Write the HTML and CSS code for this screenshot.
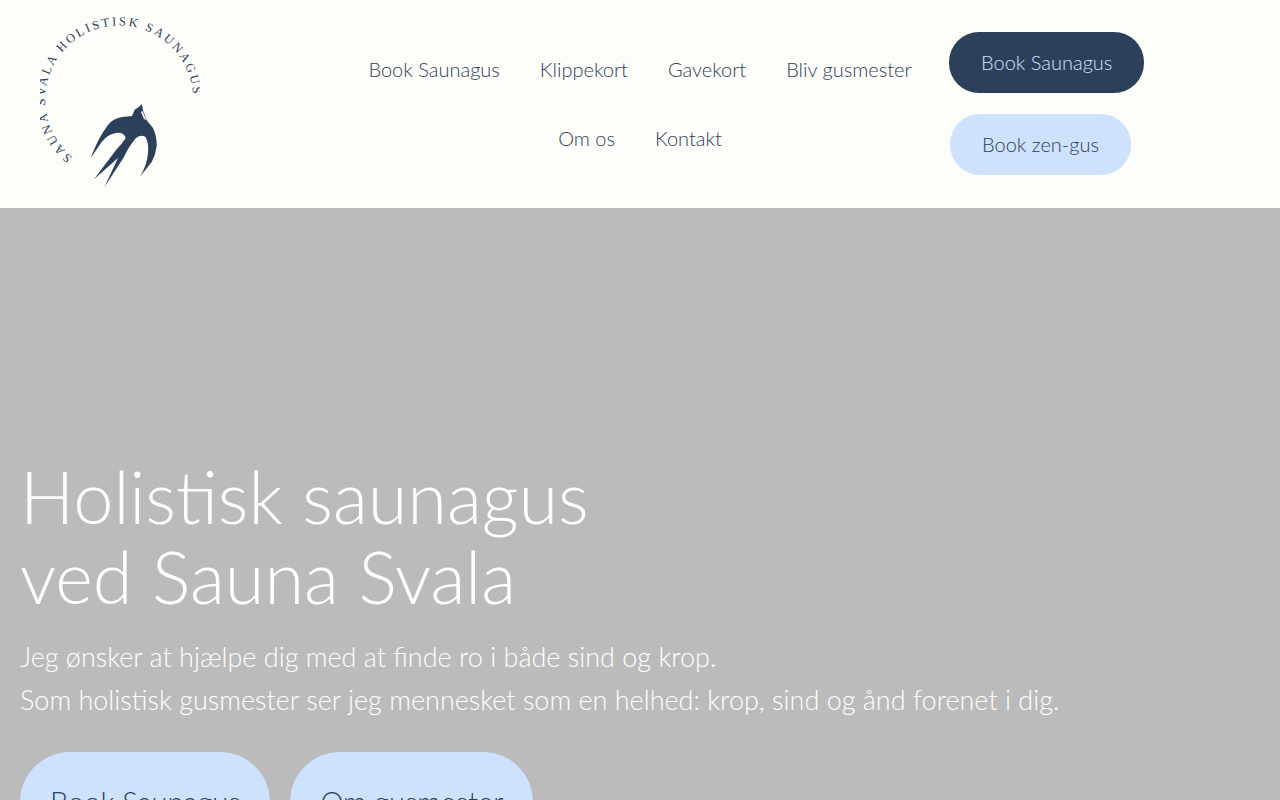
FILE: index.html
```html
<!DOCTYPE html>
<html lang="da">
<head>
    <meta charset="UTF-8">
    <meta name="viewport" content="width=device-width, initial-scale=1.0">
    <title>Sauna Svala</title>
    <link rel="stylesheet" href="styles.css">
</head>
<body>
    <header class="site-header">
        <a class="logo" href="#" aria-label="Sauna Svala">
            <svg width="160" height="176" viewBox="40 15 160 176">
                <defs>
                    <path id="logo-ring" d="M72.5 157 A 74 74 0 1 1 175 148"></path>
                </defs>
                <text class="logo-text"><textPath href="#logo-ring">SAUNA SVALA HOLISTISK SAUNAGUS</textPath></text>
                <path class="logo-bird" d="M141.7 104 L143.5 112 L146.5 120 L153 128 Q157 137 156.7 146 Q155.5 155 151.7 162 L140 176.7 Q147 165 148 153 Q149 143 145.5 137 Q141 134 136 138 Q129 146 124 157 L104.3 187.3 L118 158 L94 179.3 L116 150 Q122 144 125.7 138 Q124 132 116 133 Q108 134 101.7 142 L90.7 158 Q98 138 108 125 Q112 119 122 117 L132 116 L134.5 110 L140 106 Z"></path>
                <path class="logo-eye" d="M141 112 L144 119 L146 120 L142.5 111 Z"></path>
            </svg>
        </a>
        <nav class="main-nav">
            <a href="#">Book Saunagus</a>
            <a href="#">Klippekort</a>
            <a href="#">Gavekort</a>
            <a href="#">Bliv gusmester</a>
            <a href="#">Om os</a>
            <a href="#">Kontakt</a>
        </nav>
        <div class="header-actions">
            <a class="btn btn-dark" href="#">Book Saunagus</a>
            <a class="btn btn-light" href="#">Book zen-gus</a>
        </div>
    </header>
    <section class="hero">
        <h1>Holistisk saunagus<br>ved Sauna Svala</h1>
        <p>Jeg ønsker at hjælpe dig med at finde ro i både sind og krop.</p>
        <p>Som holistisk gusmester ser jeg mennesket som en helhed: krop, sind og ånd forenet i dig.</p>
        <div class="hero-actions">
            <a class="hero-btn" href="#">Book Saunagus</a>
            <a class="hero-btn" href="#">Om gusmester</a>
        </div>
    </section>
</body>
</html>
```

FILE: styles.css
```css
html, body {
    height: 100%;
    overflow: hidden;
}
body {
    margin: 0;
    font-family: Lato, "Open Sans", sans-serif;
    font-weight: 300;
    background-color: #bbbbbb;
    color: #2d4059;
}
a {
    text-decoration: none;
    color: inherit;
}
.site-header {
    display: flex;
    height: 208px;
    background-color: #fdfef9;
}
.logo {
    display: block;
    width: 160px;
    margin: 15px 0 0 40px;
}
.logo svg {
    display: block;
}
.logo-text {
    font-family: "Liberation Serif", serif;
    font-size: 12.5px;
    letter-spacing: 2.35px;
    fill: #2d4059;
}
.logo-bird {
    fill: #2d4059;
}
.logo-eye {
    fill: #fdfef9;
}
.main-nav {
    display: flex;
    flex-wrap: wrap;
    justify-content: center;
    align-content: flex-start;
    width: 610px;
    margin: 35px 0 0 135px;
}
.main-nav a {
    padding: 0 20px;
    font-size: 20px;
    line-height: 69px;
}
.header-actions {
    display: flex;
    flex-direction: column;
    align-items: flex-start;
    gap: 21px;
    margin: 32px 0 0 4px;
}
.btn {
    padding: 0 32px;
    border-radius: 30px;
    font-size: 20px;
    line-height: 61px;
}
.btn-dark {
    background-color: #2d4059;
    color: #cfe2fd;
}
.btn-light {
    background-color: #cfe2fd;
    margin-left: 1px;
}
.hero {
    padding: 248px 20px 0;
    color: #ffffff;
}
.hero h1 {
    margin: 0 0 19px;
    font-size: 72px;
    font-weight: 300;
    line-height: 80px;
}
.hero p {
    margin: 0;
    font-size: 27px;
    line-height: 43px;
}
.hero-actions {
    display: flex;
    gap: 20px;
    margin-top: 31px;
}
.hero-btn {
    padding: 30px;
    border-radius: 50px;
    background-color: #cfe2fd;
    color: #2d4059;
    font-size: 29px;
    line-height: 40px;
}
```
